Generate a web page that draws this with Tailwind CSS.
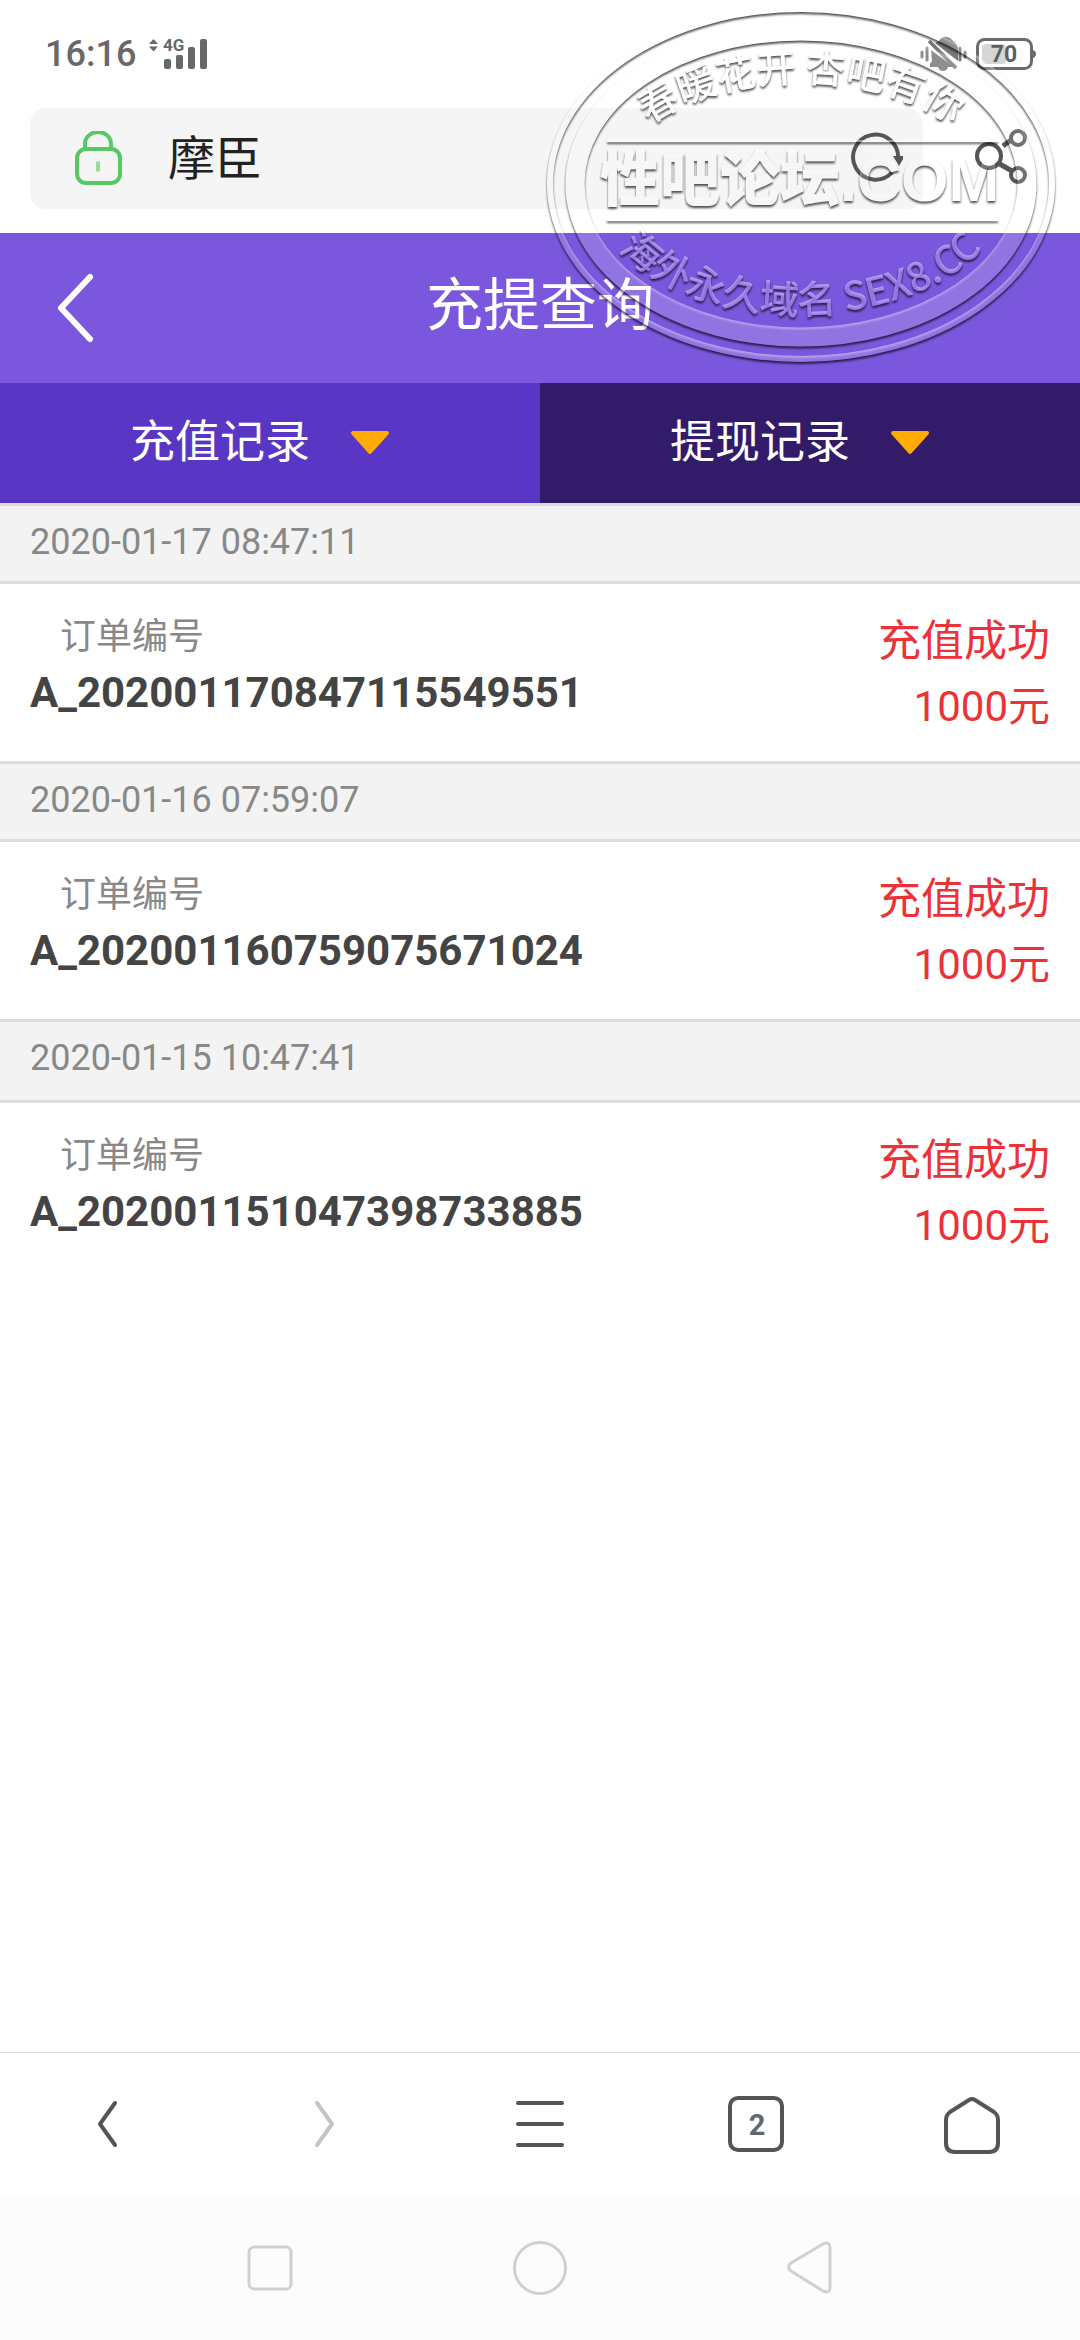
<!DOCTYPE html>
<html lang="zh-CN">
<head>
    <meta charset="UTF-8">
    <meta name="viewport" content="width=device-width, initial-scale=1.0">
    <title>充提查询</title>
    <script src="https://cdn.jsdelivr.net/npm/@tailwindcss/browser@4"></script>
</head>
<body class="relative flex min-h-screen flex-col bg-white font-[Roboto,'Noto_Sans_CJK_SC',sans-serif] text-[#444]">
    <!-- Phone status bar -->
    <div class="flex h-[108px] items-center justify-between pr-11 pl-[45px] text-[#686868]">
        <div class="flex items-center gap-3">
            <span class="text-[36px] leading-[44px] font-medium">16:16</span>
            <svg class="h-8 w-[60px] overflow-visible" viewBox="0 0 60 32" fill="currentColor" aria-hidden="true">
                <path d="M5.500 1L10 6H1ZM1 8.500H10L5.500 13.500Z"/>
                <text x="15" y="13" font-size="17" font-weight="700" font-family="Roboto">4G</text>
                <rect x="16" y="21" width="7" height="10" rx="2"/>
                <rect x="28" y="17" width="7" height="14" rx="2"/>
                <rect x="40" y="9" width="7" height="22" rx="2"/>
                <rect x="52" y="1" width="7" height="30" rx="2"/>
            </svg>
        </div>
        <div class="flex items-center gap-2">
            <svg class="h-9 w-12" viewBox="0 0 48 36" fill="#777" aria-hidden="true">
                <path d="M19 5C20 3 22 1 25 1C29 1 31 3 33 5C36 7 38 10 38 14V25L15 7Z"/>
                <path d="M11 14L34 31H28C27 34 25 35 23 35C21 35 19 34 18 31H10V28L12 25Z"/>
                <path d="M9 5L36 32" stroke="#777" stroke-width="3.500"/>
                <path d="M2 16V21M7 12V24M40 12V24M45 16V21" stroke="#777" stroke-width="3" stroke-linecap="round"/>
            </svg>
            <svg class="h-8 w-[60px]" viewBox="0 0 60 32" aria-hidden="true">
                <rect x="1.500" y="1.500" width="54" height="29" rx="7" fill="none" stroke="#6c6c6c" stroke-width="3"/>
                <path d="M57 12Q60 13 60 16Q60 19 57 20Z" fill="#6c6c6c"/>
                <rect x="6" y="6" width="24" height="20" rx="4" fill="#d6d6d6"/>
                <text x="28" y="24" text-anchor="middle" font-size="23" font-weight="700" font-family="Roboto" fill="#5f5f5f">70</text>
            </svg>
        </div>
    </div>

    <!-- Browser address bar -->
    <div class="flex items-center pb-6 pl-[30px]">
        <div class="flex h-[101px] flex-1 items-center rounded-2xl bg-[#f5f5f5] pr-5 pl-11">
            <svg class="h-14 w-12" viewBox="0 0 48 56" fill="none" stroke="#57c962" stroke-width="4" stroke-linecap="round" aria-hidden="true">
                <path d="M11 18V13C11 6 17 1 24 1C31 1 37 6 37 13V18"/>
                <rect x="3" y="18" width="43" height="34" rx="9"/>
                <path d="M24 32V39" stroke="#93dc9a"/>
            </svg>
            <input type="text" value="摩臣" aria-label="网址" class="ml-[46px] h-[72px] min-w-0 flex-1 bg-transparent text-[47px] leading-[72px] text-[#222] outline-none">
            <button type="button" aria-label="刷新" class="size-14">
                <svg viewBox="0 0 56 56" fill="none" stroke="#555" stroke-width="4" aria-hidden="true">
                    <path d="M45 41.500A22.500 22.500 0 1 1 51 28"/>
                    <path d="M46 25H58L52 35Z" fill="#555" stroke="none"/>
                </svg>
            </button>
        </div>
        <div class="flex w-[157px] justify-center">
            <button type="button" aria-label="分享" class="size-[60px]">
                <svg viewBox="0 0 60 60" fill="none" stroke="#555" stroke-width="4" aria-hidden="true">
                    <circle cx="17" cy="27" r="12"/>
                    <circle cx="46" cy="9" r="7"/>
                    <circle cx="46" cy="46" r="7"/>
                    <path d="M31 17L39 11M26 34L40 42" stroke-width="5"/>
                </svg>
            </button>
        </div>
    </div>

    <!-- Page header -->
    <header class="grid h-[150px] grid-cols-3 items-center bg-[#7b57dd] text-white">
        <button type="button" aria-label="返回" class="ml-[54px] h-[70px] w-[42px]">
            <svg viewBox="0 0 42 70" fill="none" stroke="currentColor" stroke-width="6" stroke-linecap="round" stroke-linejoin="round" aria-hidden="true">
                <path d="M36 4L7 35L36 66"/>
            </svg>
        </button>
        <h1 class="pb-1 text-center text-[57px] leading-[80px] whitespace-nowrap">充提查询</h1>
    </header>
    <nav class="grid h-[120px] grid-cols-2 text-[45px] leading-[60px] text-white">
        <button type="button" class="flex items-center justify-center gap-10 bg-[#5a36c4] pr-5">
            充值记录
            <svg class="h-7 w-10" viewBox="0 0 40 28" fill="#ffab00" stroke="#ffab00" stroke-width="4" stroke-linejoin="round" aria-hidden="true"><path d="M3 4H37L20 23Z"/></svg>
        </button>
        <button type="button" class="flex items-center justify-center gap-10 bg-[#321b69] pr-5">
            提现记录
            <svg class="h-7 w-10" viewBox="0 0 40 28" fill="#ffab00" stroke="#ffab00" stroke-width="4" stroke-linejoin="round" aria-hidden="true"><path d="M3 4H37L20 23Z"/></svg>
        </button>
    </nav>

    <!-- Deposit records -->
    <main class="flex-1">
        <section>
            <h2 class="h-[81px] border-y-3 border-[#dcdcdc] bg-[#f3f3f3] px-[30px] text-[36px] leading-[72px] text-[#888]">2020-01-17 08:47:11</h2>
            <div class="flex h-[177px] justify-between px-[30px] pt-6">
                <div>
                    <p class="pl-[30px] text-[36px] leading-[58px] text-[#888]">订单编号</p>
                    <p class="text-[42px] leading-[54px] font-bold">A_202001170847115549551</p>
                </div>
                <div class="text-right leading-[66px] text-[#ed3237]">
                    <p class="text-[43px]">充值成功</p>
                    <p class="text-[42px]">1000元</p>
                </div>
            </div>
        </section>
        <section>
            <h2 class="h-[81px] border-y-3 border-[#dcdcdc] bg-[#f3f3f3] px-[30px] text-[36px] leading-[72px] text-[#888]">2020-01-16 07:59:07</h2>
            <div class="flex h-[177px] justify-between px-[30px] pt-6">
                <div>
                    <p class="pl-[30px] text-[36px] leading-[58px] text-[#888]">订单编号</p>
                    <p class="text-[42px] leading-[54px] font-bold">A_202001160759075671024</p>
                </div>
                <div class="text-right leading-[66px] text-[#ed3237]">
                    <p class="text-[43px]">充值成功</p>
                    <p class="text-[42px]">1000元</p>
                </div>
            </div>
        </section>
        <section>
            <h2 class="h-[84px] border-y-3 border-[#dcdcdc] bg-[#f3f3f3] px-[30px] text-[36px] leading-[72px] text-[#888]">2020-01-15 10:47:41</h2>
            <div class="flex h-[177px] justify-between px-[30px] pt-6">
                <div>
                    <p class="pl-[30px] text-[36px] leading-[58px] text-[#888]">订单编号</p>
                    <p class="text-[42px] leading-[54px] font-bold">A_202001151047398733885</p>
                </div>
                <div class="text-right leading-[66px] text-[#ed3237]">
                    <p class="text-[43px]">充值成功</p>
                    <p class="text-[42px]">1000元</p>
                </div>
            </div>
        </section>
    </main>

    <!-- Browser toolbar -->
    <nav class="grid h-[145px] grid-cols-5 items-center justify-items-center border-t border-[#dedede] text-[#555]">
        <button type="button" aria-label="后退" class="size-[60px]">
            <svg viewBox="0 0 60 60" fill="none" stroke="currentColor" stroke-width="4" stroke-linecap="round" stroke-linejoin="round" aria-hidden="true"><path d="M37 8L22 29L37 50"/></svg>
        </button>
        <button type="button" aria-label="前进" class="size-[60px] text-[#c4c4c4]" disabled>
            <svg viewBox="0 0 60 60" fill="none" stroke="currentColor" stroke-width="4" stroke-linecap="round" stroke-linejoin="round" aria-hidden="true"><path d="M23 8L38 29L23 50"/></svg>
        </button>
        <button type="button" aria-label="菜单" class="size-[60px]">
            <svg viewBox="0 0 60 60" fill="none" stroke="currentColor" stroke-width="4" stroke-linecap="round" aria-hidden="true"><path d="M8 8H52M8 29H52M8 50H52"/></svg>
        </button>
        <button type="button" aria-label="标签页" class="size-[60px]">
            <svg viewBox="0 0 60 60" aria-hidden="true">
                <rect x="4" y="3" width="52" height="52" rx="8" fill="none" stroke="currentColor" stroke-width="4"/>
                <text x="31" y="40" text-anchor="middle" font-family="'Liberation Sans Narrow', Roboto, sans-serif" font-size="29" font-weight="700" fill="#666">2</text>
            </svg>
        </button>
        <button type="button" aria-label="主页" class="size-[60px]">
            <svg viewBox="0 0 60 60" fill="none" stroke="currentColor" stroke-width="4" aria-hidden="true"><path d="M27 5Q30 3 33 5L52 17Q56 20 56 25V48Q56 57 47 57H13Q4 57 4 48V25Q4 20 8 17Z"/></svg>
        </button>
    </nav>

    <!-- System navigation -->
    <nav class="grid h-[143px] grid-cols-[1fr_2fr_2fr_2fr_1fr] items-center justify-items-center bg-[#fcfcfc] text-[#d0d0d0]">
        <button type="button" aria-label="最近任务" class="col-start-2 size-[60px]">
            <svg viewBox="0 0 60 60" fill="none" stroke="currentColor" stroke-width="3" aria-hidden="true"><rect x="9" y="8" width="42" height="42" rx="5"/></svg>
        </button>
        <button type="button" aria-label="主屏幕" class="size-[60px]">
            <svg viewBox="0 0 60 60" fill="none" stroke="currentColor" stroke-width="3" aria-hidden="true"><circle cx="30" cy="29" r="25.500"/></svg>
        </button>
        <button type="button" aria-label="返回上一级" class="size-[60px]">
            <svg viewBox="0 0 60 60" fill="none" stroke="currentColor" stroke-width="3" aria-hidden="true"><path d="M43 5Q50 2 50 9V48Q50 55 43 52L11 32Q6 28 11 24Z"/></svg>
        </button>
    </nav>

    <!-- Forum stamp laid over the top of the page -->
    <svg class="pointer-events-none absolute top-0 right-5 h-[370px] w-[520px]" viewBox="0 0 520 370" fill="white" font-family="'Noto Sans CJK SC', sans-serif">
        <defs>
            <!-- Pale fill, with the shadow cut out from under it and a lit upper edge -->
            <filter id="emboss" filterUnits="userSpaceOnUse" x="0" y="0" width="520" height="370" color-interpolation-filters="sRGB">
                <feGaussianBlur in="SourceAlpha" stdDeviation="0.8" result="soft"/>
                <feOffset in="soft" dy="2" result="moved"/>
                <feComposite in="moved" in2="SourceAlpha" operator="out"/>
                <feComponentTransfer result="shadow"><feFuncA type="linear" slope="0.7"/></feComponentTransfer>
                <feComposite in="SourceGraphic" in2="moved" operator="out"/>
                <feComponentTransfer result="light"><feFuncA type="linear" slope="0.35"/></feComponentTransfer>
                <feComponentTransfer in="SourceGraphic" result="fill"><feFuncA type="linear" slope="0.17"/></feComponentTransfer>
                <feMerge><feMergeNode in="shadow"/><feMergeNode in="fill"/><feMergeNode in="light"/></feMerge>
            </filter>
            <path id="arc-top" d="M75 184A186 102 0 0 1 447 184"/>
            <path id="arc-bottom" d="M51 184A210 130 0 0 0 471 184"/>
        </defs>
        <g filter="url(#emboss)">
            <g fill="none" stroke="white">
                <ellipse cx="261" cy="184" rx="251" ry="175" stroke-width="6"/>
                <ellipse cx="261" cy="184" rx="226" ry="153" stroke-width="19"/>
                <path d="M67 141H458M67 220H458" stroke-width="2"/>
            </g>
            <text font-size="39" font-weight="500" text-anchor="middle"><textPath href="#arc-top" startOffset="50%">春暖花开 杏吧有你</textPath></text>
            <text x="60" y="201" font-size="60" font-weight="900">性吧论坛<tspan font-family="'Liberation Sans'" font-size="61" font-weight="700">.COM</tspan></text>
            <text font-size="39" font-weight="500" text-anchor="middle"><textPath href="#arc-bottom" startOffset="50%">海外永久域名 SEX8.CC</textPath></text>
        </g>
    </svg>
</body>
</html>
